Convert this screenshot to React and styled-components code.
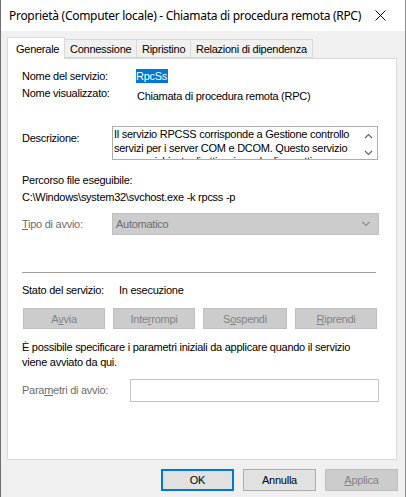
import styled, { createGlobalStyle } from "styled-components";

const Global = createGlobalStyle`
  html, body {
    margin: 0;
    padding: 0;
    background: #ffffff;
  }
  * {
    box-sizing: border-box;
  }
`;

const Window = styled.div`
  width: 406px;
  height: 497px;
  display: flex;
  flex-direction: column;
  background: #f0f0f0;
  border-left: 1px solid #6f6f6f;
  border-right: 1px solid #8a8a8a;
  font-family: "Liberation Sans", Arial, sans-serif;
  font-size: 11px;
  letter-spacing: -0.26px;
  color: #000;
  overflow: hidden;
`;

const TitleBar = styled.div`
  height: 31px;
  flex: none;
  background: #fff;
  display: flex;
  align-items: center;
  padding: 0 19px 0 8px;
`;

const Title = styled.div`
  flex: 1;
  font-family: "Noto Sans", "Open Sans", sans-serif;
  font-size: 12px;
  color: #000;
  letter-spacing: -0.3px;
  white-space: nowrap;
`;

const Body = styled.div`
  flex: 1;
  display: flex;
  flex-direction: column;
  padding: 6px 7px 0 6px;
`;

const TabStrip = styled.div`
  display: flex;
  align-items: flex-end;
  height: 21px;
  position: relative;
  z-index: 1;
`;

const Tab = styled.div`
  height: ${(p) => (p.$active ? "22px" : "19px")};
  margin-bottom: ${(p) => (p.$active ? "-1px" : "0")};
  width: ${(p) => p.$w}px;
  padding-left: ${(p) => (p.$active ? "8px" : "5px")};
  display: flex;
  align-items: center;
  background: ${(p) => (p.$active ? "#ffffff" : "#f0f0f0")};
  border: 1px solid #d9d9d9;
  border-bottom: ${(p) => (p.$active ? "none" : "1px solid #d9d9d9")};
  border-left: ${(p) => (p.$first ? "1px solid #d9d9d9" : "none")};
  white-space: nowrap;
`;

const Panel = styled.div`
  width: 390px;
  height: 402px;
  background: #fff;
  border: 1px solid #d9d9d9;
  padding: 8px 16px 0 14px;
  display: flex;
  flex-direction: column;
`;

const Row = styled.div`
  display: flex;
  align-items: ${(p) => p.$align || "center"};
  height: ${(p) => (p.$h ? `${p.$h}px` : "auto")};
  margin-top: ${(p) => p.$mt || 0}px;
`;

const Label = styled.div`
  width: ${(p) => p.$w || 115}px;
  flex: none;
  color: ${(p) => (p.$disabled ? "#6d6d6d" : "#000")};
  padding-top: ${(p) => p.$pt || 0}px;
  line-height: 13px;
  white-space: nowrap;
`;

const Value = styled.div`
  line-height: 13px;
  padding-top: ${(p) => p.$pt || 0}px;
  white-space: nowrap;
`;

const Selected = styled.span`
  background: #0078d7;
  color: #fff;
  padding: 1px 1px 1px 0;
  margin-left: -1px;
`;

const TextBox = styled.div`
  width: 266px;
  height: 34px;
  border: 1px solid #adadad;
  display: flex;
  overflow: hidden;
`;

const TextLines = styled.div`
  flex: 1;
  padding: 1px 0 0 1px;
  line-height: 13.5px;
  white-space: nowrap;
  overflow: hidden;
`;

const ScrollBar = styled.div`
  width: 17px;
  flex: none;
  display: flex;
  flex-direction: column;
  align-items: center;
  justify-content: space-between;
  padding: 6px 0 3px;
`;

const Block = styled.div`
  margin-top: ${(p) => p.$mt || 0}px;
  line-height: ${(p) => p.$lh || 17}px;
  white-space: nowrap;
`;

const Combo = styled.div`
  width: 267px;
  height: 22px;
  background: #cccccc;
  border: 1px solid #bfbfbf;
  color: #6d6d6d;
  display: flex;
  align-items: center;
  justify-content: space-between;
  padding: 0 7px 0 3px;
`;

const Separator = styled.div`
  height: 1px;
  background: #a0a0a0;
  margin: ${(p) => p.$mt}px 4px 0 0;
`;

const ServiceButtons = styled.div`
  display: grid;
  grid-template-columns: 82px 82px 84px 82px;
  column-gap: 8px;
  margin: 11px 0 0 1px;
`;

const Button = styled.div`
  height: ${(p) => p.$h || 21}px;
  width: ${(p) => (p.$w ? `${p.$w}px` : "auto")};
  display: flex;
  align-items: center;
  justify-content: center;
  background: ${(p) => (p.$disabled ? "#cccccc" : "#e1e1e1")};
  border: ${(p) =>
    p.$default
      ? "2px solid #0078d7"
      : p.$disabled
      ? "1px solid #bfbfbf"
      : "1px solid #adadad"};
  color: ${(p) => (p.$disabled ? "#838383" : "#000")};
  white-space: nowrap;
`;

const U = styled.span`
  text-decoration: underline;
  text-underline-offset: 1px;
`;

const Input = styled.div`
  width: 249px;
  height: 23px;
  border: 1px solid #c4c4c4;
  background: #fff;
`;

const Footer = styled.div`
  display: flex;
  justify-content: flex-end;
  gap: 9px;
  margin-top: 9px;
`;

const Chevron = ({ up, color = "#606060", w = 9 }) => (
  <svg width={w} height="6" viewBox="0 0 9 6">
    <path
      d={up ? "M1 5 L4.5 1.5 L8 5" : "M1 1 L4.5 4.5 L8 1"}
      fill="none"
      stroke={color}
      strokeWidth="1.1"
    />
  </svg>
);

const CloseIcon = () => (
  <svg width="11" height="11" viewBox="0 0 11 11">
    <path d="M0.5 0.5 L10.5 10.5 M10.5 0.5 L0.5 10.5" stroke="#000" strokeWidth="1" />
  </svg>
);

const tabs = [
  { name: "Generale", w: 58 },
  { name: "Connessione", w: 72 },
  { name: "Ripristino", w: 54 },
  { name: "Relazioni di dipendenza", w: 122 },
];

export default function App() {
  return (
    <>
      <Global />
      <Window>
        <TitleBar>
          <Title>Proprietà (Computer locale) - Chiamata di procedura remota (RPC)</Title>
          <CloseIcon />
        </TitleBar>
        <Body>
          <TabStrip>
            {tabs.map((t, i) => (
              <Tab key={t.name} $active={i === 0} $first={i === 0} $w={t.w}>
                {t.name}
              </Tab>
            ))}
          </TabStrip>
          <Panel>
            <Row $h={18}>
              <Label>Nome del servizio:</Label>
              <Value>
                <Selected>RpcSs</Selected>
              </Value>
            </Row>
            <Row $h={18} $align="flex-start">
              <Label $pt={2}>Nome visualizzato:</Label>
              <Value $pt={5}>Chiamata di procedura remota (RPC)</Value>
            </Row>
            <Row $mt={23} $align="flex-start">
              <Label $w={90} $pt={6}>
                Descrizione:
              </Label>
              <TextBox>
                <TextLines>
                  <div>Il servizio RPCSS corrisponde a Gestione controllo</div>
                  <div>servizi per i server COM e DCOM. Questo servizio</div>
                  <div>esegue richieste di attivazione degli oggetti</div>
                </TextLines>
                <ScrollBar>
                  <Chevron up />
                  <Chevron />
                </ScrollBar>
              </TextBox>
            </Row>
            <Block $mt={12}>
              <div>Percorso file eseguibile:</div>
              <div>C:\Windows\system32\svchost.exe -k rpcss -p</div>
            </Block>
            <Row $mt={7}>
              <Label $w={90} $disabled>
                <U>T</U>ipo di avvio:
              </Label>
              <Combo>
                <span>Automatico</span>
                <Chevron color="#8a8a8a" w={10} />
              </Combo>
            </Row>
            <Separator $mt={37} />
            <Row $mt={11}>
              <Label $w={97}>Stato del servizio:</Label>
              <Value>In esecuzione</Value>
            </Row>
            <ServiceButtons>
              <Button $disabled>
                A<U>v</U>via
              </Button>
              <Button $disabled>
                Inte<U>r</U>rompi
              </Button>
              <Button $disabled>
                S<U>o</U>spendi
              </Button>
              <Button $disabled>
                <U>R</U>iprendi
              </Button>
            </ServiceButtons>
            <Block $mt={11} $lh={15}>
              <div>È possibile specificare i parametri iniziali da applicare quando il servizio</div>
              <div>viene avviato da qui.</div>
            </Block>
            <Row $mt={9}>
              <Label $w={108} $disabled>
                Para<U>m</U>etri di avvio:
              </Label>
              <Input />
            </Row>
          </Panel>
          <Footer>
            <Button $default $w={73} $h={22}>
              OK
            </Button>
            <Button $w={73} $h={22}>
              Annulla
            </Button>
            <Button $disabled $w={73} $h={22}>
              <U>A</U>pplica
            </Button>
          </Footer>
        </Body>
      </Window>
    </>
  );
}
